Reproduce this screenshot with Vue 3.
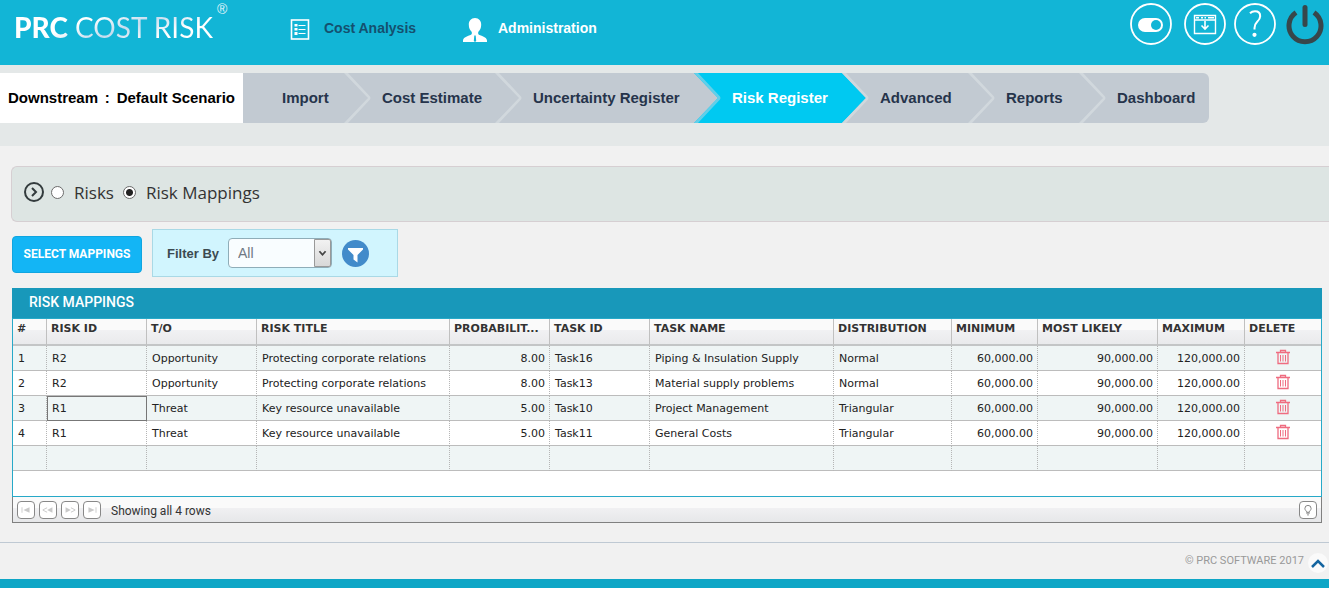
<script setup>
import { ref } from 'vue'

const steps = ['Import', 'Cost Estimate', 'Uncertainty Register', 'Risk Register', 'Advanced', 'Reports', 'Dashboard']
const activeStep = 3

const view = ref('mappings')
const filter = ref('All')

const columns = [
  { key: 'n', label: '#', cls: 'c-num' },
  { key: 'risk', label: 'RISK ID', cls: 'c-100' },
  { key: 'to', label: 'T/O', cls: 'c-to' },
  { key: 'title', label: 'RISK TITLE', cls: 'c-title' },
  { key: 'prob', label: 'PROBABILIT...', cls: 'c-100', right: true },
  { key: 'task', label: 'TASK ID', cls: 'c-100' },
  { key: 'name', label: 'TASK NAME', cls: 'c-name' },
  { key: 'dist', label: 'DISTRIBUTION', cls: 'c-dist' },
  { key: 'min', label: 'MINIMUM', cls: 'c-min', right: true },
  { key: 'likely', label: 'MOST LIKELY', cls: 'c-likely', right: true },
  { key: 'max', label: 'MAXIMUM', cls: 'c-max', right: true },
  { key: 'del', label: 'DELETE', cls: 'c-del' }
]

const amounts = { min: '60,000.00', likely: '90,000.00', max: '120,000.00' }
const rows = [
  { n: 1, risk: 'R2', to: 'Opportunity', title: 'Protecting corporate relations', prob: '8.00', task: 'Task16', name: 'Piping & Insulation Supply', dist: 'Normal', ...amounts },
  { n: 2, risk: 'R2', to: 'Opportunity', title: 'Protecting corporate relations', prob: '8.00', task: 'Task13', name: 'Material supply problems', dist: 'Normal', ...amounts },
  { n: 3, risk: 'R1', to: 'Threat', title: 'Key resource unavailable', prob: '5.00', task: 'Task10', name: 'Project Management', dist: 'Triangular', ...amounts },
  { n: 4, risk: 'R1', to: 'Threat', title: 'Key resource unavailable', prob: '5.00', task: 'Task11', name: 'General Costs', dist: 'Triangular', ...amounts }
]
const isSelected = (row, col) => row.n === 3 && col.key === 'risk'

const pagers = [
  { label: 'First page', d: 'M4 6h1v6H4zM13 6v6L6 9z' },
  { label: 'Previous page', d: 'M8 6v1L4 9l4 2v1L3 9.500v-1zM14 6v6L8 9z' },
  { label: 'Next page', d: 'M4 6v6l6-3zM10 6v1l4 2-4 2v1l5-2.500v-1z' },
  { label: 'Last page', d: 'M5 6v6l7-3zM13 6h1v6h-1z' }
]
</script>

<template>
  <div class="page">
    <header class="top">
      <h1 class="logo"><span class="logo-text"><b>PRC</b> COST RISK</span><sup>®</sup></h1>
      <nav class="main-nav">
        <a href="#" class="main-link current">
          <svg class="sheet" viewBox="0 0 19 21" aria-hidden="true">
            <rect x="1" y="1" width="17" height="19" fill="none" stroke="#fff" stroke-width="1.600" />
            <path d="M4 5h3v2.500H4zM4 9h3v2.500H4zM4 13h3v3H4z" fill="#fff" />
            <path d="M8 6.500h7M8 10.500h7M8 14.500h7" stroke="#fff" stroke-width="1.200" />
          </svg>
          Cost Analysis
        </a>
        <a href="#" class="main-link">
          <svg class="person" viewBox="0 0 24 24" aria-hidden="true">
            <path d="M12 0c4 0 6.200 3 6.200 6.700 0 3-1.200 5.600-3 7.300v2c1.500 1.800 8.800 2.500 8.800 6.500V24H0v-1.500c0-4 7.300-4.700 8.800-6.500v-2c-1.800-1.700-3-4.300-3-7.300C5.800 3 8 0 12 0z" fill="#fff" />
            <path d="M11.300 17.500h1.400l.5 5.500-1.200 1-1.200-1z" fill="#12b5d6" />
          </svg>
          Administration
        </a>
      </nav>
      <div class="tools">
        <button type="button" class="tool" aria-label="Toggle">
          <svg viewBox="0 0 42 42">
            <circle cx="21" cy="21" r="20" fill="none" stroke="#fff" stroke-width="1.800" />
            <rect x="8" y="15" width="25" height="14" rx="7" fill="#fff" />
            <circle cx="26" cy="22" r="5" fill="#12b5d6" />
          </svg>
        </button>
        <button type="button" class="tool save" aria-label="Download">
          <svg viewBox="0 0 42 42" fill="none" stroke="#fff">
            <circle cx="21" cy="21" r="20" stroke-width="1.800" />
            <path d="M10.500 12.500h21v18h-21zM10.500 17h21" stroke-width="1.400" />
            <path d="M12 14.800h3M17 14.800h2M20.500 14.800h1.500M24 14.800h6" stroke-width="1.500" />
            <path d="M21 18v8M17.500 22.500L21 26l3.500-3.500" stroke-width="1.600" />
          </svg>
        </button>
        <button type="button" class="tool help" aria-label="Help">
          <svg viewBox="0 0 42 42" fill="none" stroke="#fff">
            <circle cx="21" cy="21" r="20" stroke-width="1.800" />
            <path d="M16 10.200c1.200-1.200 3-1.900 5-1.900 3.200 0 5.200 1.900 5.200 4.900 0 2.700-1.600 4.200-3.200 5.700-1.700 1.600-2.500 2.800-2.500 6v1.500" stroke-width="2" />
            <circle cx="20.500" cy="31.800" r="2.100" fill="#fff" stroke="none" />
          </svg>
        </button>
        <button type="button" class="tool power" aria-label="Log out">
          <svg viewBox="0 0 38 42" fill="none" stroke="#37474b" stroke-linecap="round">
            <path d="M10 9.500A16 16 0 1 0 28 9.500" stroke-width="5" stroke-linecap="butt" />
            <path d="M19 4.500v17" stroke-width="5" />
          </svg>
        </button>
      </div>
    </header>

    <div class="band">
      <div class="scenario"><span>Downstream</span><span>:</span><span>Default Scenario</span></div>
      <ol class="steps">
        <li v-for="(step, i) in steps" :key="step" :class="['step', { active: i === activeStep }]">
          <a href="#">{{ step }}</a>
          <svg v-if="i < steps.length - 1" class="chevron" viewBox="0 0 27 50" aria-hidden="true">
            <rect width="27" height="50" :class="i + 1 === activeStep ? 'fill-on' : 'fill-off'" />
            <path d="M0 0L24 25L0 50z" :class="i === activeStep ? 'fill-on' : 'fill-off'" />
            <path d="M0 0H4L26 23.500Q27 25 26 26.500L4 50H0L24 25z" :class="i + 1 === activeStep ? 'edge-on' : 'edge-off'" />
          </svg>
        </li>
      </ol>
    </div>

    <main>
      <section class="switcher">
        <svg class="expand" viewBox="0 0 20 20" fill="none" stroke="#333b3d" stroke-width="2" aria-hidden="true">
          <circle cx="10" cy="10" r="9" />
          <path d="M8 6l4 4-4 4" />
        </svg>
        <label><input v-model="view" type="radio" name="view" value="risks">Risks</label>
        <label><input v-model="view" type="radio" name="view" value="mappings">Risk Mappings</label>
      </section>

      <div class="actions">
        <button type="button" class="primary">SELECT MAPPINGS</button>
        <form class="filter" @submit.prevent>
          <label for="filter-by">Filter By</label>
          <span class="select">
            <select id="filter-by" v-model="filter">
              <option>All</option>
            </select>
            <svg viewBox="0 0 17 28" fill="none" aria-hidden="true">
              <path d="M5 12l3.500 4 3.500-4" stroke="#444" stroke-width="2" />
            </svg>
          </span>
          <button type="submit" class="funnel" aria-label="Apply filter">
            <svg viewBox="0 0 27 27">
              <circle cx="13.500" cy="13.500" r="13.500" fill="#428bca" />
              <path d="M6 8h15v1.500L15.500 15v7.500L11.500 19.500V15L6 9.500z" fill="#fff" />
            </svg>
          </button>
        </form>
      </div>

      <section class="panel">
        <h2>RISK MAPPINGS</h2>
        <div class="grid">
          <table>
            <colgroup>
              <col v-for="col in columns" :key="col.key" :class="col.cls">
            </colgroup>
            <thead>
              <tr><th v-for="col in columns" :key="col.key" scope="col">{{ col.label }}</th></tr>
            </thead>
            <tbody>
              <tr v-for="row in rows" :key="row.n">
                <td v-for="col in columns" :key="col.key" :class="{ right: col.right, selected: isSelected(row, col) }">
                  <button v-if="col.key === 'del'" type="button" class="trash" :aria-label="'Delete row ' + row.n">
                    <svg viewBox="0 0 14 16" fill="none" stroke="#ef6c80">
                      <path d="M0 3.500h14M4.500 3.500v-2h5v2M2 3.500v11h10v-11" stroke-width="1.300" />
                      <path d="M4.500 6v6.500M7 6v6.500M9.500 6v6.500" stroke-width="1" />
                    </svg>
                  </button>
                  <template v-else>{{ row[col.key] }}</template>
                </td>
              </tr>
              <tr><td v-for="col in columns" :key="col.key"></td></tr>
            </tbody>
          </table>
        </div>
        <div class="status">
          <button v-for="p in pagers" :key="p.label" type="button" class="mini" :aria-label="p.label" disabled>
            <svg viewBox="0 0 18 18"><path :d="p.d" fill="#c9c9c9" /></svg>
          </button>
          <span>Showing all 4 rows</span>
          <button type="button" class="mini hint" aria-label="Tips">
            <svg viewBox="0 0 18 18" fill="none" stroke="#777">
              <path d="M7.500 11.500c0-1.500-2-2.200-2-4.200a3.500 3.500 0 0 1 7 0c0 2-2 2.700-2 4.200zM7 12.500h4M8 14.500h2" />
            </svg>
          </button>
        </div>
      </section>
    </main>

    <footer>
      <span>© PRC SOFTWARE 2017</span>
      <a href="#" class="to-top" aria-label="Back to top">
        <svg viewBox="0 0 20 20" fill="none"><path d="M4 14l6-6 6 6" stroke="#1565a0" stroke-width="2.500" /></svg>
      </a>
    </footer>
    <div class="base"></div>
  </div>
</template>

<style>
body { margin: 0; background: #fff; }
</style>

<style scoped>
* { box-sizing: border-box; }
.page { background: #f1f1f1; font-family: "Liberation Sans", Arial, sans-serif; color: #333; }
svg { display: block; }
a { color: inherit; text-decoration: none; }
button { padding: 0; border: 0; background: none; font: inherit; cursor: pointer; }

.top { display: flex; height: 65px; background: #12b5d6; }
.logo { display: flex; align-items: flex-start; gap: 4px; width: 290px; margin: 0; padding: 9px 0 0 14px; font-family: Lato, sans-serif; font-size: 28px; font-weight: 400; line-height: 36px; white-space: nowrap; }
.logo-text { background: linear-gradient(160deg, #fff 35%, #c5dcee 55%, #fff 75%); background-clip: text; color: transparent; }
.logo b { font-weight: 900; }
.logo sup { margin-top: -7px; color: #e4f6fb; font-family: "Liberation Sans", Arial, sans-serif; font-size: 14px; font-weight: 400; line-height: 14px; }
.main-nav { display: flex; gap: 46px; padding-bottom: 10px; align-items: center; }
.main-link { display: flex; align-items: center; color: #fff; font-size: 14px; font-weight: 700; white-space: nowrap; }
.main-link.current { color: #14506f; width: 127px; }
.main-link svg { margin-top: 4px; }
.sheet { width: 20px; height: 21px; margin-right: 14px; }
.person { width: 24px; height: 24px; margin-right: 11px; }
.tools { display: flex; margin-left: auto; padding: 3px 5px 0 0; }
.tool { height: 42px; }
.tool svg { width: 42px; height: 42px; }
.save { margin-left: 12px; }
.help { margin-left: 8px; }
.power { margin-left: 10px; }
.power svg { width: 38px; }

.band { display: flex; height: 81px; padding: 8px 0 23px; background: #e4e8e8; font-size: 15px; font-weight: 700; line-height: 50px; white-space: nowrap; }
.scenario { display: flex; justify-content: space-between; width: 243px; padding: 0 8px; background: #fff; color: #000; }
.steps { display: grid; grid-template-columns: 127px 151px 199px 148px 126px 111px 104px; margin: 0; padding: 0; list-style: none; color: #26344b; border-radius: 0 6px 6px 0; overflow: hidden; }
.step { position: relative; padding-left: 12px; background: #c2cad2; }
.step:first-child { padding-left: 39px; }
.step.active { background: #00c9f1; color: #fff; }
.chevron { position: absolute; z-index: 1; top: 0; right: -1px; width: 27px; height: 50px; }
.fill-on { fill: #00c9f1; }
.fill-off { fill: #c2cad2; }
.edge-on { fill: #62cfe9; }
.edge-off { fill: #d1d8dd; }

.switcher { display: flex; align-items: center; height: 56px; margin: 20px 0 0 11px; padding: 0 0 4px 12px; border: 1px solid #d6cfd2; border-right: 0; border-radius: 6px 0 0 6px; background: #dde5e3; font-family: "Open Sans", "Noto Sans", sans-serif; font-size: 17px; }
.expand { width: 20px; height: 20px; margin-right: 7px; }
.switcher label { display: flex; align-items: center; margin-right: 9px; }
.switcher input { appearance: none; width: 13px; height: 13px; margin: 0 10px 0 0; border: 1px solid #6b6b6b; border-radius: 50%; background: #fff; }
.switcher input:checked { background: radial-gradient(circle, #222 3px, #fff 4px); }

.actions { display: flex; align-items: flex-start; gap: 10px; margin: 7px 0 0 12px; }
.primary { width: 130px; height: 37px; margin-top: 7px; padding-bottom: 2px; border: 1px solid #10a5e0; border-radius: 4px; background: #13b5f5; color: #fff; font-family: Roboto, sans-serif; font-size: 12px; font-weight: 700; }
.filter { display: flex; align-items: center; width: 246px; height: 48px; padding-left: 14px; border: 1px solid #a9d9e6; background: #d1f5fe; font-size: 13px; font-weight: 700; color: #3c4a50; }
.select { position: relative; width: 104px; height: 30px; margin: 0 10px 0 9px; }
.select select { appearance: none; width: 100%; height: 100%; padding: 0 0 1px 9px; border: 1px solid #8fadb8; border-radius: 4px; background: #f9fdff; color: #6f7883; font-family: "Liberation Sans", Arial, sans-serif; font-size: 14px; }
.select svg { position: absolute; top: 1px; right: 1px; width: 17px; height: 28px; border: 1px solid #999; border-radius: 0 2px 2px 0; background: linear-gradient(#f2f2f2, #d8d8d8); pointer-events: none; }
.funnel svg { width: 27px; height: 27px; }

.panel { margin: 11px 7px 0 12px; }
.panel h2 { height: 30px; margin: 0; padding-left: 17px; background: #1898ba; color: #fff; font-family: Roboto, sans-serif; font-size: 14px; font-weight: 500; line-height: 29px; }
.grid { height: 179px; border: 1px solid #27a9c8; background: #fff; font-family: "DejaVu Sans", Verdana, sans-serif; font-size: 11px; color: #222; }
table { width: 100%; table-layout: fixed; border-collapse: separate; border-spacing: 0; }
.c-num { width: 34px; }
.c-100 { width: 100px; }
.c-to { width: 110px; }
.c-title { width: 193px; }
.c-name { width: 184px; }
.c-dist { width: 118px; }
.c-min { width: 86px; }
.c-likely { width: 120px; }
.c-max { width: 87px; }
.c-del { width: 76px; }
th, td { overflow: hidden; white-space: nowrap; text-align: left; }
th { height: 27px; padding: 0 4px 7px; border-right: 1px solid #c0c0c0; border-bottom: 2px solid #c3c5c6; background: linear-gradient(#fafafa 45%, #f1f1f3 46%, #e9eaec); font-weight: 700; color: #333; }
td { height: 25px; padding: 0 4px 0 5px; border-right: 1px dotted #b5b5b5; border-bottom: 1px solid #bcbcbc; }
th:last-child, td:last-child { border-right: 0; }
tbody tr:nth-child(odd) td { background: #eff5f5; }
.right { text-align: right; }
td.selected { outline: 1px solid #777; outline-offset: -1px; }
.trash { display: block; margin: -3px auto 0 26px; }
.trash svg { width: 14px; height: 16px; }
.status { display: flex; align-items: center; gap: 4px; height: 26px; padding: 0 4px; border: 1px solid #808080; border-top: 0; background: linear-gradient(#fafafa 45%, #f0f0f2 46%, #e6e7e9); font-family: Roboto, sans-serif; font-size: 12px; }
.status span { margin-left: 6px; padding-top: 2px; }
.mini { width: 18px; height: 18px; border: 1px solid #888; border-radius: 4px; background: #fff; }
.mini svg { width: 16px; height: 16px; }
.hint { margin-left: auto; }

footer { display: flex; justify-content: flex-end; gap: 4px; height: 37px; margin-top: 19px; padding-right: 1px; border-top: 1px solid #bfc9d3; color: #999; font-family: Roboto, sans-serif; font-size: 11px; line-height: 36px; }
.to-top { width: 20px; height: 20px; margin-top: 10px; border-radius: 50%; background: #fafafa; }
.to-top svg { width: 20px; height: 20px; }
.base { height: 9px; background: #0ea6c6; }
</style>
